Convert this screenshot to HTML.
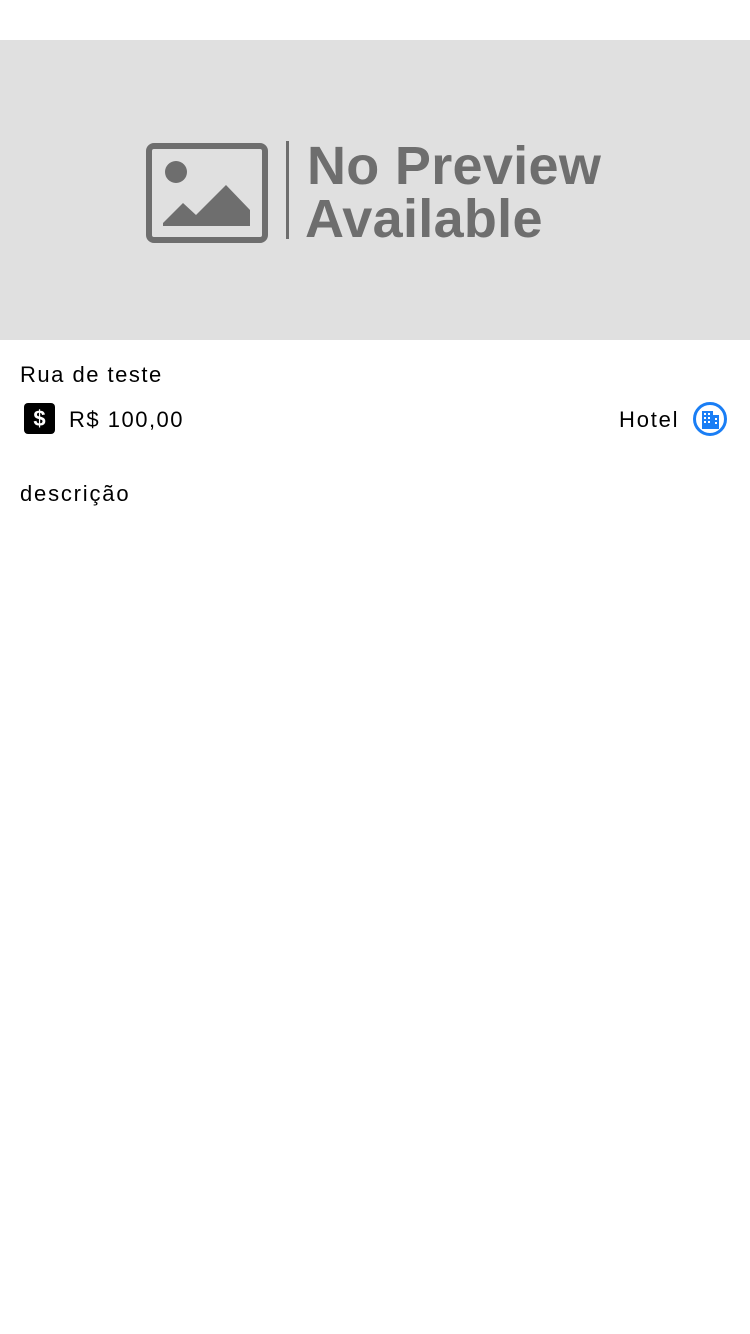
<!DOCTYPE html>
<html><head><meta charset="utf-8"><style>
body{margin:0;width:750px;height:1334px;background:#fff;font-family:"Liberation Sans",sans-serif;position:relative;overflow:hidden}
.img{position:absolute;left:0;top:40px;width:750px;height:300px;background:#e0e0e0}
.t{position:absolute;color:#000;font-size:22px;line-height:1;letter-spacing:1.5px}
.np{position:absolute;color:#6e6e6e;font-weight:bold;font-size:54px;line-height:1;letter-spacing:0.3px}
</style></head><body>
<div class="img">
<svg style="position:absolute;left:0;top:0" width="750" height="300">
<rect x="149" y="106" width="116" height="94" rx="5" fill="none" stroke="#6e6e6e" stroke-width="6"/>
<circle cx="176" cy="132" r="11" fill="#6e6e6e"/>
<polygon points="163,183 183,163 196,175 226,145 250,170 250,186 163,186" fill="#6e6e6e"/>
<rect x="286" y="101" width="3" height="98" fill="#6e6e6e"/>
</svg>
<div class="np" style="left:307px;top:99px">No Preview</div>
<div class="np" style="left:305px;top:152px">Available</div>
</div>
<div class="t" style="left:20px;top:364px">Rua de teste</div>
<div style="position:absolute;left:24px;top:403px;width:31px;height:31px;background:#000;border-radius:4px;color:#fff;font-size:22px;font-weight:bold;text-align:center;line-height:31px">$</div>
<div class="t" style="left:69px;top:409px">R$ 100,00</div>
<div class="t" style="left:619px;top:409px;letter-spacing:1.8px">Hotel</div>
<svg style="position:absolute;left:692px;top:401px" width="36" height="36" viewBox="0 0 36 36">
<circle cx="18" cy="18" r="15.5" fill="none" stroke="#1a7ef5" stroke-width="3"/>
<rect x="10" y="10" width="11" height="18" fill="#1a7ef5"/>
<rect x="21" y="14" width="6" height="14" fill="#1a7ef5"/>
<g fill="#fff"><rect x="12" y="12" width="2" height="2"/><rect x="16" y="12" width="2" height="2"/><rect x="12" y="16" width="2" height="2"/><rect x="16" y="16" width="2" height="2"/><rect x="12" y="20" width="2" height="2"/><rect x="16" y="20" width="2" height="2"/><rect x="23" y="17" width="2" height="2"/><rect x="23" y="21" width="2" height="2"/></g>
</svg>
<div class="t" style="left:20px;top:483px;letter-spacing:1.8px">descrição</div>
</body></html>
